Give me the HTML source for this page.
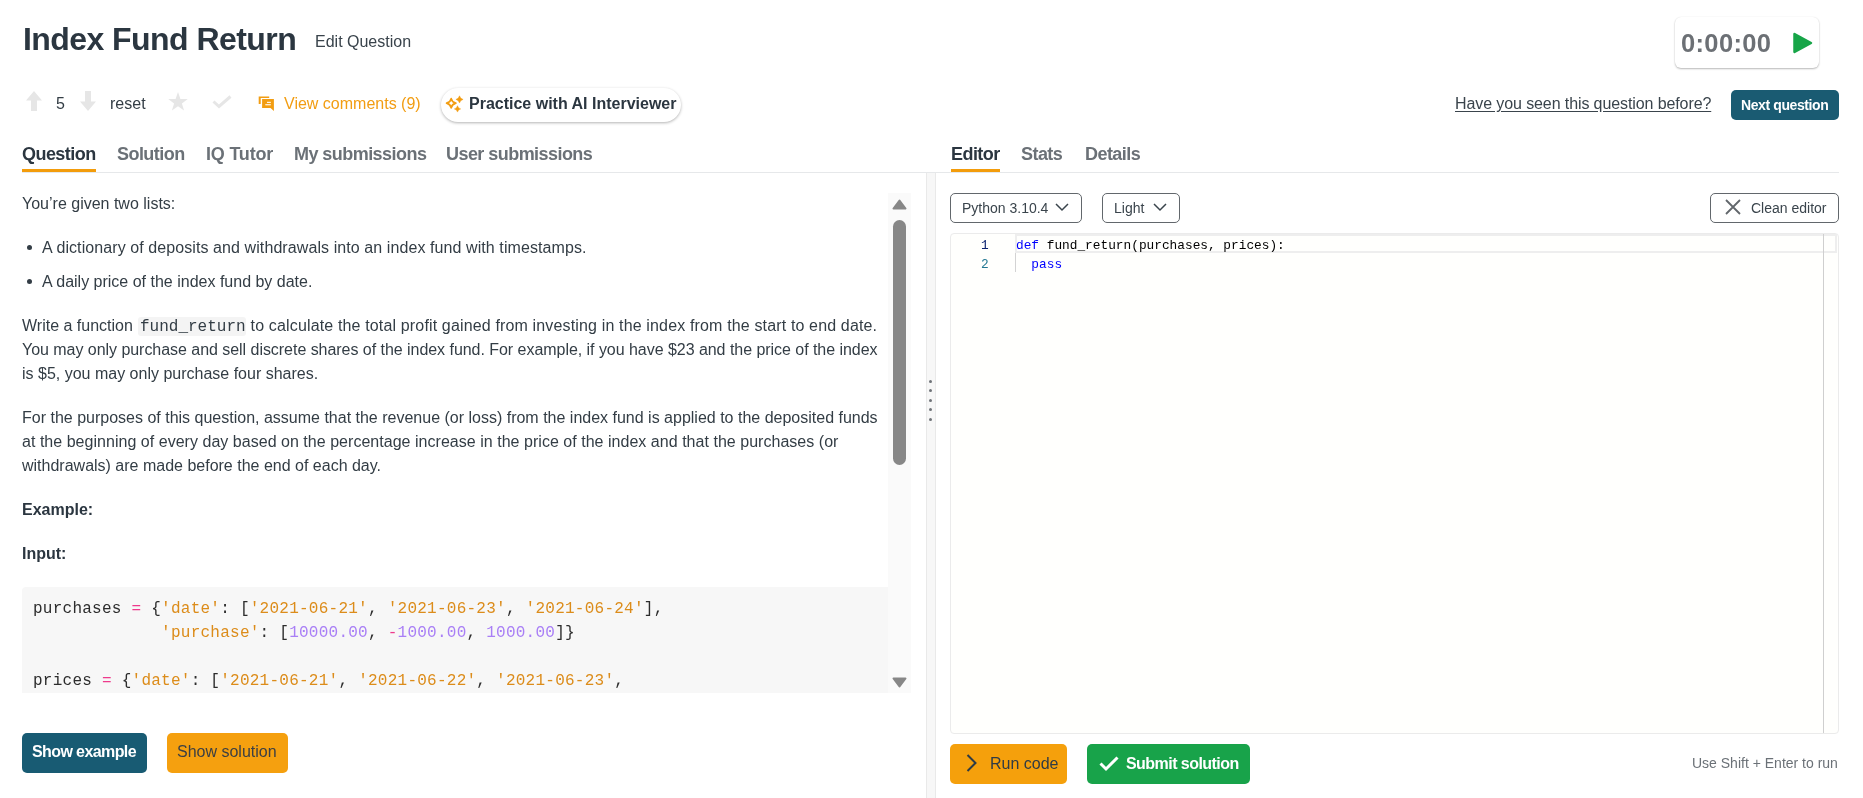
<!DOCTYPE html>
<html><head><meta charset="utf-8">
<style>
html,body{margin:0;padding:0;}
body{width:1863px;height:798px;overflow:hidden;position:relative;background:#fff;font-family:"Liberation Sans",sans-serif;color:#333d45;}
.a{position:absolute;}
.t{position:absolute;white-space:pre;line-height:1;will-change:transform;}
.m{font-family:"Liberation Mono",monospace;}
.tab{font-size:18px;font-weight:700;letter-spacing:-0.55px;color:#6b7177;}
.p{font-size:16px;color:#333d45;}
svg{position:absolute;overflow:visible;}
.s{color:#dc8c1a;}
.n{color:#a97ff6;}
.o{color:#ee3a8c;}
.cb{left:32.5px;font-size:16px;letter-spacing:0.25px;color:#2d2d2d;}
</style></head><body>

<!-- header -->
<div class="t" style="left:23px;top:22.9px;font-size:32px;font-weight:700;letter-spacing:-0.56px;color:#2b3640;">Index Fund Return</div>
<div class="t" style="left:315px;top:33.5px;font-size:16px;color:#39434b;">Edit Question</div>

<div class="a" style="left:1675px;top:17px;width:144px;height:51px;border-radius:6px;background:#fff;box-shadow:0 1px 2px rgba(0,0,0,0.28),0 0 1px rgba(0,0,0,0.08);"></div>
<div class="t" style="left:1681px;top:30.5px;font-size:25.5px;font-weight:700;letter-spacing:0.35px;color:#6c7075;">0:00:00</div>
<svg style="left:1793px;top:32px" width="20" height="22" viewBox="0 0 20 22"><path d="M1.5 2 L18 11 L1.5 20 Z" fill="#17a548" stroke="#17a548" stroke-width="2.5" stroke-linejoin="round"/></svg>

<!-- row 2 -->
<svg style="left:26px;top:91px" width="16" height="20" viewBox="0 0 16 20"><path d="M8 0 L16 9.5 L11 9.5 L11 20 L5 20 L5 9.5 L0 9.5 Z" fill="#e6e6e6"/></svg>
<div class="t p" style="left:56px;top:95.5px;">5</div>
<svg style="left:80px;top:91px" width="16" height="20" viewBox="0 0 16 20"><path d="M8 20 L16 10.5 L11 10.5 L11 0 L5 0 L5 10.5 L0 10.5 Z" fill="#e6e6e6"/></svg>
<div class="t p" style="left:110px;top:95.5px;">reset</div>
<svg style="left:168px;top:92px" width="20" height="19" viewBox="0 0 20 19"><path d="M10 0 L12.4 6.9 L19.8 7 L13.9 11.5 L16.1 18.6 L10 14.3 L3.9 18.6 L6.1 11.5 L0.2 7 L7.6 6.9 Z" fill="#e6e6e6"/></svg>
<svg style="left:212px;top:95px" width="20" height="13" viewBox="0 0 20 13"><path d="M1.5 6.5 L7 11.5 L18.5 1.5" fill="none" stroke="#e6e6e6" stroke-width="3"/></svg>

<svg style="left:254px;top:92px" width="26" height="22" viewBox="0 0 26 22"><path d="M4.7 4.5 H15.2 V6 H6.7 V11.9 H4.7 Z" fill="#f29d12"/><path d="M7.4 6.3 H20.6 V19.8 L16.3 16.6 H7.4 Z" fill="#fff"/><path d="M8.1 7 H19.9 V19 L16.5 15.9 H8.1 Z" fill="#f29d12"/><rect x="13" y="9.8" width="3.8" height="1.1" fill="#fff"/><rect x="11.3" y="12.2" width="5.5" height="1.1" fill="#fff"/></svg>
<div class="t" style="left:283.5px;top:96.2px;font-size:16px;color:#f29d12;">View comments (9)</div>

<div class="a" style="left:441px;top:88px;width:240px;height:34px;border-radius:17px;background:#fff;box-shadow:0 1px 3px rgba(0,0,0,0.3);"></div>
<svg style="left:440px;top:90px" width="30" height="26" viewBox="0 0 30 26"><path d="M11.2 8.6 Q12.1 12.299999999999999 15.799999999999999 13.2 Q12.1 14.1 11.2 17.799999999999997 Q10.299999999999999 14.1 6.6 13.2 Q10.299999999999999 12.299999999999999 11.2 8.6 Z" fill="none" stroke="#f29d12" stroke-width="1.7" stroke-linejoin="round"/><path d="M19.5 5.800000000000001 Q20.2 8.700000000000001 23.1 9.4 Q20.2 10.1 19.5 13.0 Q18.8 10.1 15.9 9.4 Q18.8 8.700000000000001 19.5 5.800000000000001 Z" fill="#f29d12" stroke="#f29d12" stroke-width="0.4"/><path d="M17.5 15.7 Q18.15 18.25 20.7 18.9 Q18.15 19.549999999999997 17.5 22.099999999999998 Q16.85 19.549999999999997 14.3 18.9 Q16.85 18.25 17.5 15.7 Z" fill="#f29d12" stroke="#f29d12" stroke-width="0.4"/></svg>
<div class="t" style="left:469px;top:96px;font-size:16px;font-weight:700;color:#2b3640;">Practice with AI Interviewer</div>

<div class="t" style="left:1455px;top:95.8px;font-size:16px;letter-spacing:-0.1px;color:#3a444c;text-decoration:underline;text-underline-offset:2px;">Have you seen this question before?</div>
<div class="a" style="left:1731px;top:90px;width:108px;height:30px;border-radius:5px;background:#1a5b72;"></div>
<div class="t" style="left:1741px;top:97.8px;font-size:14px;font-weight:700;letter-spacing:-0.4px;color:#fff;">Next question</div>

<!-- tabs -->
<div class="t tab" style="left:22px;top:144.8px;color:#2b3640;">Question</div>
<div class="t tab" style="left:117px;top:144.8px;">Solution</div>
<div class="t tab" style="left:206px;top:144.8px;letter-spacing:-0.2px;">IQ Tutor</div>
<div class="t tab" style="left:294px;top:144.8px;">My submissions</div>
<div class="t tab" style="left:446px;top:144.8px;">User submissions</div>
<div class="t tab" style="left:951px;top:144.8px;color:#2b3640;">Editor</div>
<div class="t tab" style="left:1021px;top:144.8px;">Stats</div>
<div class="t tab" style="left:1085px;top:144.8px;">Details</div>
<div class="a" style="left:22px;top:172px;width:1817px;height:1px;background:#e6e8ea;"></div>
<div class="a" style="left:22px;top:169px;width:74px;height:3px;background:#f39c0b;"></div>
<div class="a" style="left:951px;top:169px;width:49px;height:3px;background:#f39c0b;"></div>


<!-- left content -->
<div class="t p" style="left:22px;top:195.5px;">You’re given two lists:</div>
<div class="a" style="left:27px;top:245px;width:5px;height:5px;border-radius:50%;background:#333d45;"></div>
<div class="t p" style="left:42px;top:239.5px;letter-spacing:0.085px;">A dictionary of deposits and withdrawals into an index fund with timestamps.</div>
<div class="a" style="left:27px;top:279px;width:5px;height:5px;border-radius:50%;background:#333d45;"></div>
<div class="t p" style="left:42px;top:273.5px;">A daily price of the index fund by date.</div>

<div class="a" style="left:138px;top:317px;width:108px;height:19px;background:#f4f4f4;border-radius:3px;"></div>
<div class="t p" style="left:22px;top:317.5px;">Write a function </div>
<div class="t m" style="left:139.5px;top:318.7px;font-size:16px;color:#333d45;">fund_return</div>
<div class="t p" style="left:246px;top:317.5px;letter-spacing:0.15px;"> to calculate the total profit gained from investing in the index from the start to end date.</div>
<div class="t p" style="left:22px;top:341.5px;letter-spacing:-0.04px;">You may only purchase and sell discrete shares of the index fund. For example, if you have $23 and the price of the index</div>
<div class="t p" style="left:22px;top:365.5px;">is $5, you may only purchase four shares.</div>
<div class="t p" style="left:22px;top:409.5px;">For the purposes of this question, assume that the revenue (or loss) from the index fund is applied to the deposited funds</div>
<div class="t p" style="left:22px;top:433.5px;letter-spacing:0.03px;">at the beginning of every day based on the percentage increase in the price of the index and that the purchases (or</div>
<div class="t p" style="left:22px;top:457.5px;">withdrawals) are made before the end of each day.</div>
<div class="t p" style="left:22px;top:501.5px;font-weight:700;color:#2b3640;">Example:</div>
<div class="t p" style="left:22px;top:545.5px;font-weight:700;color:#2b3640;">Input:</div>

<div class="a" style="left:22px;top:587px;width:866px;height:106px;background:#f7f7f7;border-radius:4px 0 0 0;"></div>
<div class="t m cb" style="top:600.7px;">purchases <span class="o">=</span> {<span class="s">'date'</span>: [<span class="s">'2021-06-21'</span>, <span class="s">'2021-06-23'</span>, <span class="s">'2021-06-24'</span>],</div>
<div class="t m cb" style="top:624.7px;">             <span class="s">'purchase'</span>: [<span class="n">10000.00</span>, <span class="o">-</span><span class="n">1000.00</span>, <span class="n">1000.00</span>]}</div>
<div class="t m cb" style="top:672.7px;">prices <span class="o">=</span> {<span class="s">'date'</span>: [<span class="s">'2021-06-21'</span>, <span class="s">'2021-06-22'</span>, <span class="s">'2021-06-23'</span>,</div>

<!-- left scrollbar -->
<div class="a" style="left:888px;top:193px;width:23px;height:500px;background:#fafafa;"></div>
<svg style="left:892px;top:199px" width="15" height="11" viewBox="0 0 15 11"><path d="M7.5 1.5 L13.5 9.5 L1.5 9.5 Z" fill="#878787" stroke="#878787" stroke-width="2" stroke-linejoin="round"/></svg>
<div class="a" style="left:893px;top:220px;width:13px;height:245px;border-radius:6.5px;background:#878787;"></div>
<svg style="left:892px;top:677px" width="15" height="11" viewBox="0 0 15 11"><path d="M7.5 9.5 L13.5 1.5 L1.5 1.5 Z" fill="#878787" stroke="#878787" stroke-width="2" stroke-linejoin="round"/></svg>

<!-- divider -->
<div class="a" style="left:926px;top:173px;width:8px;height:625px;background:#f7f7f7;border-left:1px solid #e9e9e9;border-right:1px solid #e9e9e9;"></div>
<div class="a" style="left:928.8px;top:380px;width:3px;height:3px;border-radius:50%;background:#6f7378;"></div>
<div class="a" style="left:928.8px;top:389px;width:3px;height:3px;border-radius:50%;background:#6f7378;"></div>
<div class="a" style="left:928.8px;top:399px;width:3px;height:3px;border-radius:50%;background:#6f7378;"></div>
<div class="a" style="left:928.8px;top:408px;width:3px;height:3px;border-radius:50%;background:#6f7378;"></div>
<div class="a" style="left:928.8px;top:418px;width:3px;height:3px;border-radius:50%;background:#6f7378;"></div>

<!-- bottom-left buttons -->
<div class="a" style="left:22px;top:733px;width:125px;height:40px;border-radius:5px;background:#185b73;"></div>
<div class="t" style="left:32px;top:743.5px;font-size:16px;font-weight:700;letter-spacing:-0.6px;color:#fff;">Show example</div>
<div class="a" style="left:167px;top:733px;width:121px;height:40px;border-radius:5px;background:#f5a00f;"></div>
<div class="t" style="left:177px;top:743.5px;font-size:16px;color:#3b3f44;">Show solution</div>

<!-- right toolbar -->
<div class="a" style="left:950px;top:193px;width:130px;height:28px;border:1px solid #62676c;border-radius:5px;"></div>
<div class="t" style="left:961.5px;top:201.4px;font-size:14px;color:#3a444c;">Python 3.10.4</div>
<svg style="left:1055px;top:203px" width="14" height="8" viewBox="0 0 14 8"><path d="M1 1 L7 7 L13 1" fill="none" stroke="#3a444c" stroke-width="1.5"/></svg>
<div class="a" style="left:1102px;top:193px;width:76px;height:28px;border:1px solid #62676c;border-radius:5px;"></div>
<div class="t" style="left:1114px;top:201.4px;font-size:14px;color:#3a444c;">Light</div>
<svg style="left:1153px;top:203px" width="14" height="8" viewBox="0 0 14 8"><path d="M1 1 L7 7 L13 1" fill="none" stroke="#3a444c" stroke-width="1.5"/></svg>
<div class="a" style="left:1710px;top:193px;width:127px;height:28px;border:1px solid #62676c;border-radius:5px;"></div>
<svg style="left:1725px;top:199px" width="16" height="16" viewBox="0 0 16 16"><path d="M1 1 L15 15 M15 1 L1 15" fill="none" stroke="#62676c" stroke-width="1.8"/></svg>
<div class="t" style="left:1751px;top:201.4px;font-size:14px;color:#3a444c;">Clean editor</div>

<!-- editor -->
<div class="a" style="left:950px;top:233px;width:887px;height:499px;border:1px solid #ebebeb;border-radius:4px;background:#fffffd;"></div>
<div class="a" style="left:1015px;top:234px;width:822px;height:19px;box-sizing:border-box;border:2px solid #eeeeee;border-right-width:2px;"></div>
<div class="a" style="left:1823px;top:234px;width:1px;height:499px;background:#cfcfcf;"></div>
<div class="a" style="left:1015px;top:253px;width:1px;height:19px;background:#d3d3d3;"></div>
<div class="t m" style="left:981px;top:239.7px;font-size:12.8px;color:#0b216f;">1</div>
<div class="t m" style="left:981px;top:258.7px;font-size:12.8px;color:#237893;">2</div>
<div class="t m" style="left:1015.5px;top:239.7px;font-size:12.8px;color:#000;"><span style="color:#0000ff">def</span> fund_return(purchases, prices):</div>
<div class="t m" style="left:1015.5px;top:258.7px;font-size:12.8px;color:#0000ff;">  pass</div>

<!-- bottom right -->
<div class="a" style="left:950px;top:744px;width:117px;height:40px;border-radius:5px;background:#f5a00c;"></div>
<svg style="left:966px;top:754px" width="12" height="18" viewBox="0 0 12 18"><path d="M1.5 1 L9.5 9 L1.5 17" fill="none" stroke="#2f3b45" stroke-width="2"/></svg>
<div class="t" style="left:990px;top:755.5px;font-size:16px;color:#2f3b45;">Run code</div>
<div class="a" style="left:1087px;top:744px;width:163px;height:40px;border-radius:5px;background:#18a34a;"></div>
<svg style="left:1099px;top:756px" width="20" height="15" viewBox="0 0 20 15"><path d="M1.5 7.5 L7 13 L18.5 1.5" fill="none" stroke="#fff" stroke-width="3"/></svg>
<div class="t" style="left:1126px;top:755.5px;font-size:16px;font-weight:700;letter-spacing:-0.55px;color:#fff;">Submit solution</div>
<div class="t" style="right:25px;top:755.8px;font-size:14px;color:#6b7177;">Use Shift + Enter to run</div>

</body></html>
